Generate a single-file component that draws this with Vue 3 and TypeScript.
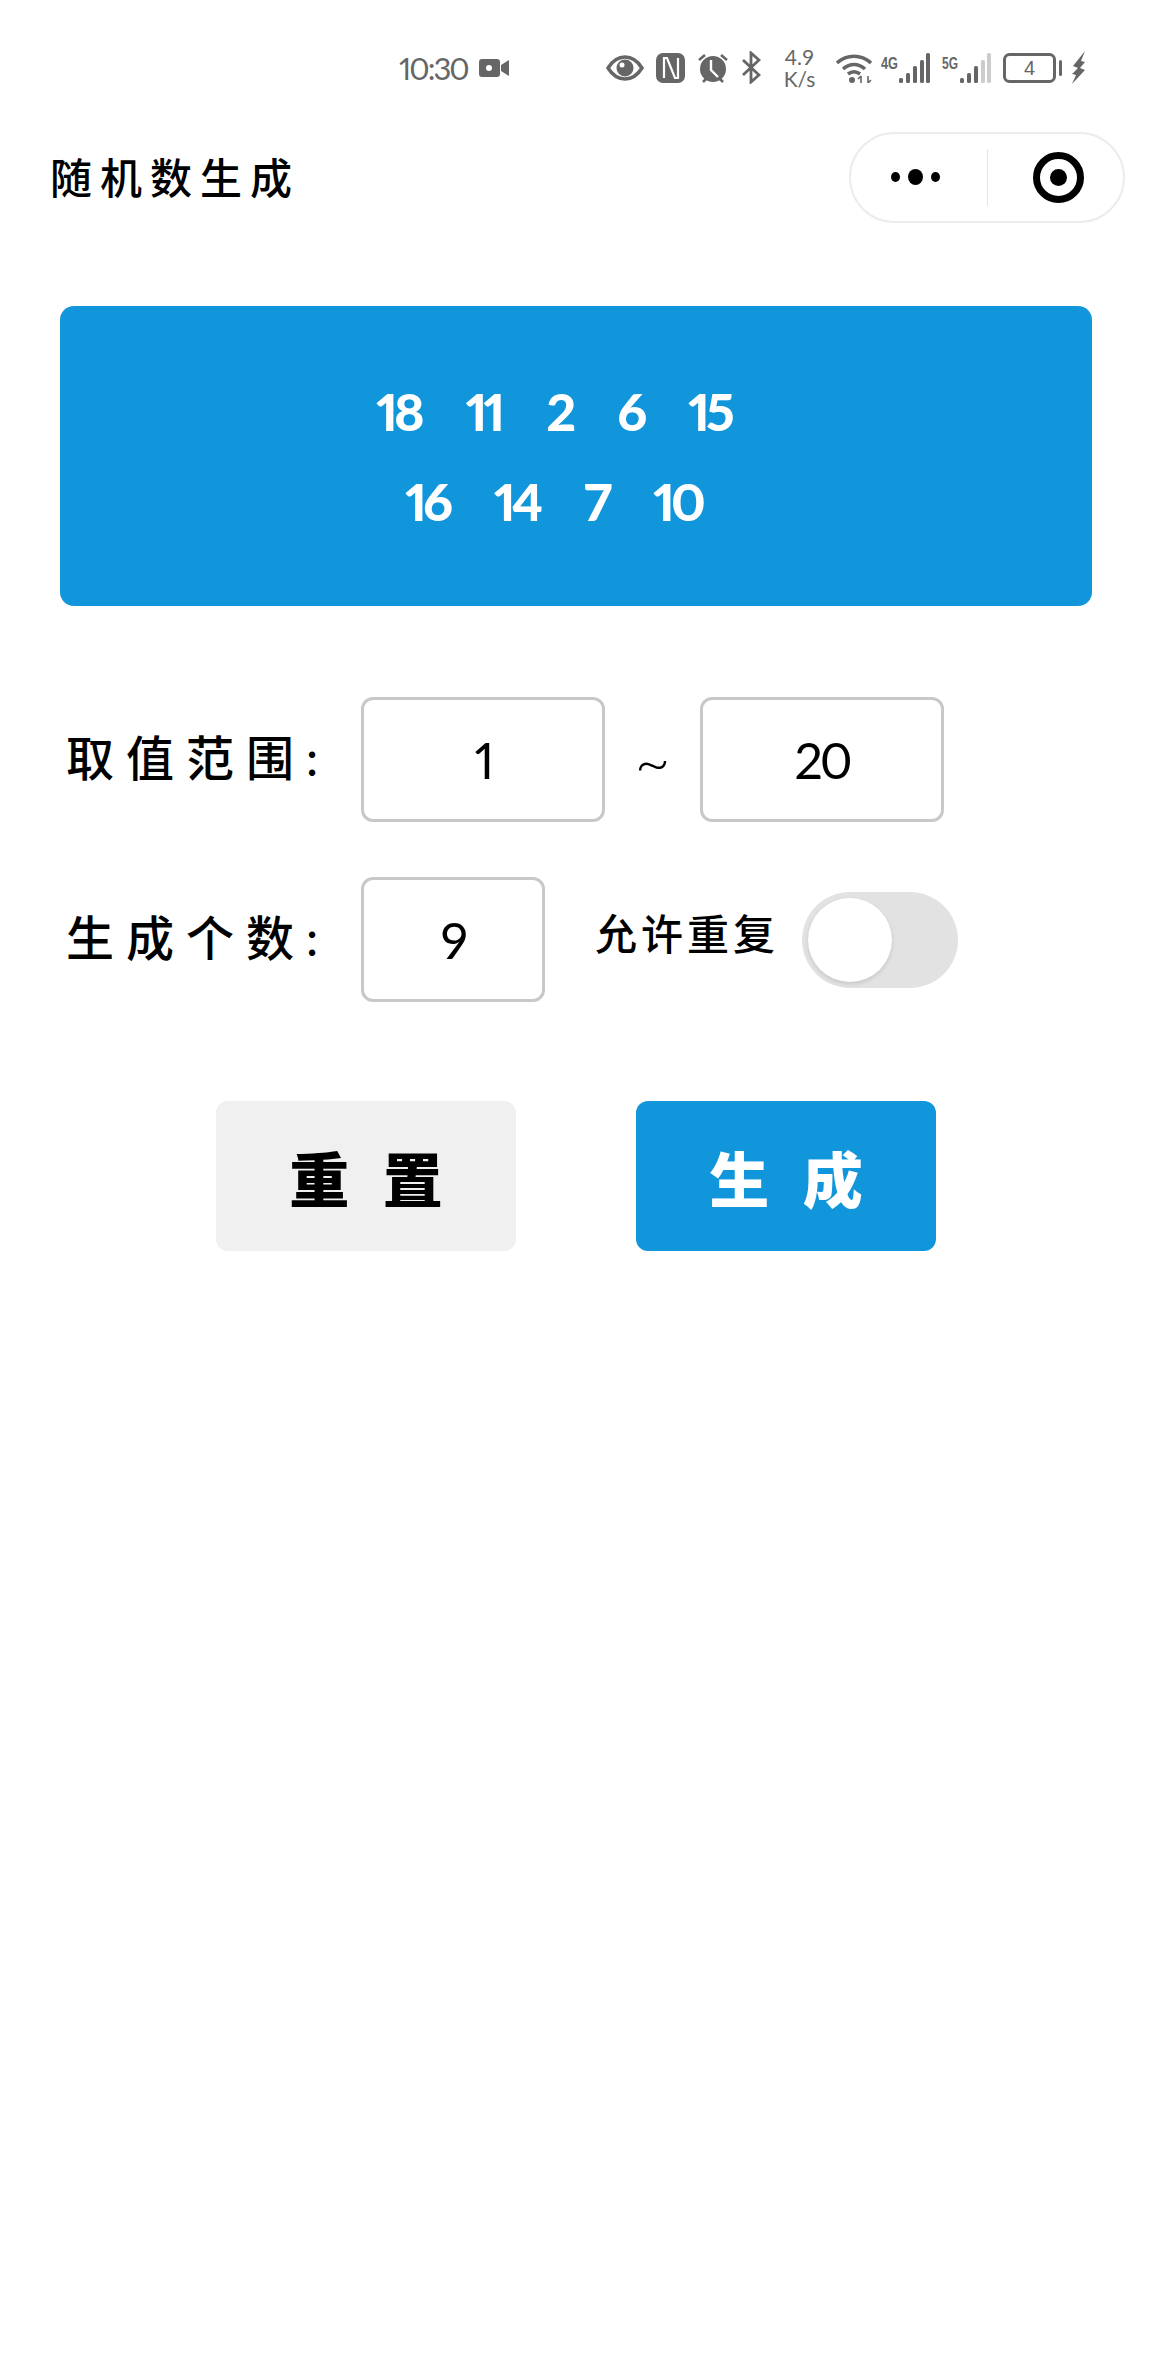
<script setup lang="ts">
import { ref } from 'vue'

const minValue = ref('1')
const maxValue = ref('20')
const count = ref('9')
const allowRepeat = ref(false)
const numbers = ref<number[]>([18, 11, 2, 6, 15, 16, 14, 7, 10])

function reset() {
  minValue.value = '1'
  maxValue.value = '20'
  count.value = '9'
  allowRepeat.value = false
  numbers.value = []
}

function generate() {
  const min = Number(minValue.value)
  const max = Number(maxValue.value)
  const result: number[] = []
  const wanted = Math.min(Number(count.value), allowRepeat.value ? 99 : max - min + 1)
  while (result.length < wanted) {
    const n = min + Math.floor(Math.random() * (max - min + 1))
    if (allowRepeat.value || !result.includes(n)) result.push(n)
  }
  numbers.value = result
}
</script>

<template>
  <div class="page">
    <div class="status-bar">
      <span class="time">10:30</span>
      <svg class="ico video" width="30" height="18" viewBox="0 0 30 18">
        <rect x="0" y="0" width="21" height="18" rx="3" fill="#666" />
        <path d="M22 6l8-5v16l-8-5z" fill="#666" />
        <circle cx="10" cy="9" r="3" fill="#fff" />
      </svg>

      <svg class="ico eye" width="38" height="26" viewBox="0 0 38 26">
        <path d="M2 13C7 5 12 2 19 2s12 3 17 11c-5 8-10 11-17 11S7 21 2 13z" fill="none" stroke="#666" stroke-width="3.5" />
        <circle cx="19" cy="13" r="8.5" fill="#666" />
        <circle cx="16" cy="10" r="2.5" fill="#fff" />
      </svg>
      <svg class="ico" width="29" height="30" viewBox="0 0 29 30">
        <rect width="29" height="30" rx="7" fill="#666" />
        <path d="M8 25V5h3l8 20h3V5" fill="none" stroke="#fff" stroke-width="2.2" />
      </svg>
      <svg class="ico" width="32" height="30" viewBox="0 0 32 30">
        <circle cx="16" cy="16" r="13" fill="#666" />
        <path d="M2 7l6-5M30 7l-6-5M6 29l3-3M26 29l-3-3" stroke="#666" stroke-width="2.6" />
        <path d="M14 7v10l7 7" fill="none" stroke="#fff" stroke-width="2.4" />
      </svg>
      <svg class="ico" width="20" height="33" viewBox="0 0 20 33">
        <path d="M2 9l16 15-8 7V2l8 7L2 24" fill="none" stroke="#666" stroke-width="2.8" />
      </svg>
      <div class="speed">
        <span>4.9</span>
        <span>K/s</span>
      </div>
      <svg class="ico wifi" width="38" height="30" viewBox="0 0 38 30">
        <path d="M2 10c10-9 24-9 34 0M8 16c7-6 15-6 22 0M13 21c4-3 8-3 12 0" fill="none" stroke="#666" stroke-width="3.6" />
        <circle cx="17" cy="27" r="3" fill="#666" />
        <path d="M26 23v7M33 23v7M23 26l3-3M36 27l-3 3" stroke="#666" stroke-width="1.6" fill="none" />
      </svg>
      <svg class="ico signal-first" width="49" height="30" viewBox="0 0 49 30">
        <text x="0" y="16" class="net-label" textLength="17" lengthAdjust="spacingAndGlyphs">4G</text>
        <rect x="18" y="25" width="4" height="5" rx="1.5" fill="#666" />
        <rect x="25" y="20" width="4" height="10" rx="1.5" fill="#666" />
        <rect x="32" y="13" width="4" height="17" rx="1.5" fill="#666" />
        <rect x="39" y="7" width="4" height="23" rx="1.5" fill="#666" />
        <rect x="45" y="0" width="4" height="30" rx="1.5" fill="#666" />
      </svg>
      <svg class="ico" width="49" height="30" viewBox="0 0 49 30">
        <text x="0" y="16" class="net-label" textLength="16" lengthAdjust="spacingAndGlyphs">5G</text>
        <rect x="18" y="25" width="4" height="5" rx="1.5" fill="#666" />
        <rect x="25" y="20" width="4" height="10" rx="1.5" fill="#666" />
        <rect x="32" y="13" width="4" height="17" rx="1.5" fill="#666" />
        <rect x="39" y="7" width="4" height="23" rx="1.5" fill="#ccc" />
        <rect x="45" y="0" width="4" height="30" rx="1.5" fill="#ccc" />
      </svg>
      <svg class="ico" width="59" height="30" viewBox="0 0 59 30">
        <rect x="1.5" y="1.5" width="50" height="27" rx="5" fill="none" stroke="#666" stroke-width="3" />
        <text x="26.5" y="22" class="battery-label" text-anchor="middle">4</text>
        <rect x="56" y="7" width="3" height="16" rx="1.5" fill="#666" />
      </svg>
      <svg class="ico bolt" width="15" height="33" viewBox="0 0 15 33">
        <path d="M14 0L2 15l5 2-6 6 4 1-4 9 13-14-5-2 5-6-4-1z" fill="#666" />
      </svg>
    </div>

    <div class="nav-bar">
      <span class="nav-title">随机数生成</span>
      <div class="capsule">
        <div class="capsule-more">
          <i class="dot"></i>
          <i class="dot dot-big"></i>
          <i class="dot"></i>
        </div>
        <div class="capsule-line"></div>
        <div class="capsule-target">
          <i class="target-dot"></i>
        </div>
      </div>
    </div>

    <div class="result-card">
      <div class="result-list">
        <span v-for="(n, i) in numbers" :key="i" class="result-num">{{ n }}</span>
      </div>
    </div>

    <div class="form">
      <div class="form-row">
        <label class="form-label">取值范围:</label>
        <input v-model="minValue" class="num-input" type="text" />
        <span class="tilde">~</span>
        <input v-model="maxValue" class="num-input" type="text" />
      </div>
      <div class="form-row">
        <label class="form-label">生成个数:</label>
        <input v-model="count" class="num-input num-input-small" type="text" />
        <span class="repeat-label">允许重复</span>
        <button
          class="switch"
          :class="{ 'switch-on': allowRepeat }"
          type="button"
          @click="allowRepeat = !allowRepeat"
        >
          <i class="switch-knob"></i>
        </button>
      </div>
    </div>

    <div class="actions">
      <button class="action action-reset" type="button" @click="reset">重 置</button>
      <button class="action action-create" type="button" @click="generate">生 成</button>
    </div>
  </div>
</template>

<style>
html,
body {
  margin: 0;
  background: #fff;
}
</style>

<style scoped>
.page {
  width: 1152px;
  height: 2376px;
  overflow: hidden;
  background: #fff;
  font-family: Lato, "Noto Sans CJK SC", sans-serif;
  color: #000;
}

.status-bar {
  display: flex;
  align-items: center;
  box-sizing: border-box;
  height: 131px;
  padding: 4px 0 0 399px;
}

.time {
  width: 68px;
  font-size: 31px;
  letter-spacing: -2px;
  font-variant-numeric: proportional-nums;
  color: #666;
  white-space: nowrap;
}

.ico {
  flex: none;
  margin-left: 12px;
}

.eye {
  margin-left: 97px;
}

.speed {
  display: flex;
  flex-direction: column;
  width: 33px;
  margin-left: 22px;
  font-size: 21px;
  line-height: 22px;
  color: #666;
  text-align: center;
}

.wifi {
  margin-left: 19px;
}

.signal-first {
  margin-left: 8px;
}

.bolt {
  margin-left: 9px;
}

.net-label {
  font-family: "Liberation Sans", sans-serif;
  font-size: 17px;
  font-weight: 700;
  fill: #666;
}

.battery-label {
  font-family: "Liberation Sans", sans-serif;
  font-size: 20px;
  fill: #666;
}

.nav-bar {
  display: flex;
  align-items: center;
  justify-content: space-between;
  height: 92px;
  padding: 0 27px 0 50px;
}

.nav-title {
  margin-bottom: 3px;
  font-size: 42px;
  font-weight: 500;
  letter-spacing: 8px;
  white-space: nowrap;
}

.capsule {
  display: flex;
  align-items: center;
  box-sizing: border-box;
  width: 276px;
  height: 91px;
  border: 2px solid #ececec;
  border-radius: 46px;
}

.capsule-more {
  display: flex;
  align-items: center;
  justify-content: center;
  gap: 8px;
  box-sizing: border-box;
  width: 136px;
  padding-right: 8px;
}

.dot {
  width: 9px;
  height: 10px;
  border-radius: 50%;
  background: #000;
}

.dot-big {
  width: 15px;
  height: 16px;
}

.capsule-line {
  width: 1px;
  height: 57px;
  background: #e4e4e4;
}

.capsule-target {
  box-sizing: border-box;
  display: flex;
  align-items: center;
  justify-content: center;
  width: 51px;
  height: 51px;
  margin-left: 45px;
  border: 7px solid #000;
  border-radius: 50%;
}

.target-dot {
  width: 17px;
  height: 17px;
  border-radius: 50%;
  background: #000;
}

.result-card {
  display: flex;
  align-items: center;
  justify-content: center;
  height: 300px;
  margin: 83px 60px 0;
  border-radius: 14px;
  background: #1296db;
}

.result-list {
  display: flex;
  flex-wrap: wrap;
  justify-content: center;
  width: 440px;
}

.result-num {
  margin-right: 45px;
  font-size: 52px;
  font-weight: 900;
  font-variant-numeric: proportional-nums;
  line-height: 90px;
  letter-spacing: -4px;
  color: #fff;
}

.form {
  display: flex;
  flex-direction: column;
  gap: 55px;
  margin-top: 91px;
  padding-left: 66px;
}

.form-row {
  display: flex;
  align-items: center;
  height: 125px;
}

.form-label {
  flex: none;
  width: 295px;
  margin-bottom: 9px;
  font-size: 48px;
  font-weight: 500;
  letter-spacing: 12px;
  white-space: nowrap;
}

.num-input {
  box-sizing: border-box;
  width: 244px;
  height: 125px;
  padding: 0;
  border: 3px solid #c8c8c8;
  border-radius: 12px;
  outline: none;
  background: #fff;
  font-family: Lato, sans-serif;
  font-size: 50px;
  font-variant-numeric: proportional-nums;
  letter-spacing: -3px;
  color: #000;
  text-align: center;
}

.num-input-small {
  width: 184px;
}

.tilde {
  width: 95px;
  font-size: 62px;
  font-weight: 300;
  line-height: 1;
  text-align: center;
}

.repeat-label {
  width: 207px;
  margin: 0 0 16px 50px;
  font-size: 42px;
  font-weight: 500;
  letter-spacing: 4px;
  white-space: nowrap;
}

.switch {
  display: block;
  box-sizing: border-box;
  width: 156px;
  height: 96px;
  padding: 6px;
  border: 0;
  border-radius: 48px;
  background: #e2e2e2;
}

.switch-on {
  background: #1296db;
}

.switch-knob {
  display: block;
  width: 84px;
  height: 84px;
  border-radius: 50%;
  background: #fff;
  box-shadow: 0 2px 4px rgba(0, 0, 0, 0.12);
}

.switch-on .switch-knob {
  margin-left: auto;
}

.actions {
  display: flex;
  gap: 120px;
  margin-top: 99px;
  padding-left: 216px;
}

.action {
  width: 300px;
  height: 150px;
  border: 0;
  border-radius: 12px;
  font-family: "Noto Sans CJK SC", sans-serif;
  font-size: 60px;
  font-weight: 900;
  word-spacing: 20px;
}

.action-reset {
  background: #f0f0f0;
  color: #000;
}

.action-create {
  background: #1296db;
  color: #fff;
}
</style>
